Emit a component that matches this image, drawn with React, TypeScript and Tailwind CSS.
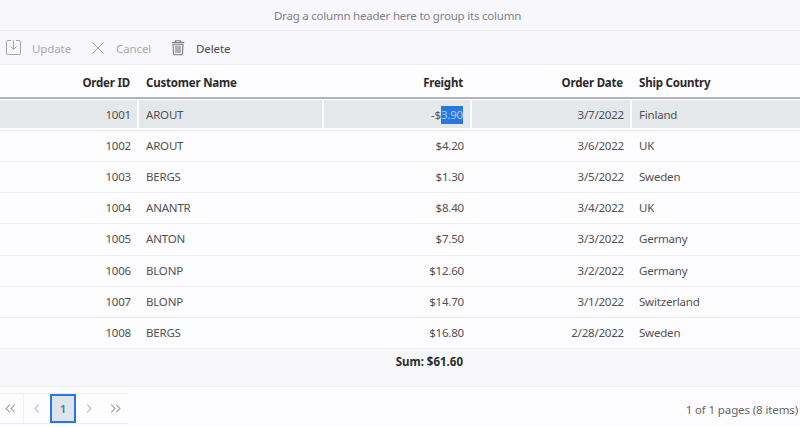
import React from "react";

type Order = { id: number; customer: string; freight: string; date: string; country: string };

const orders: Order[] = [
  { id: 1002, customer: "AROUT", freight: "$4.20", date: "3/6/2022", country: "UK" },
  { id: 1003, customer: "BERGS", freight: "$1.30", date: "3/5/2022", country: "Sweden" },
  { id: 1004, customer: "ANANTR", freight: "$8.40", date: "3/4/2022", country: "UK" },
  { id: 1005, customer: "ANTON", freight: "$7.50", date: "3/3/2022", country: "Germany" },
  { id: 1006, customer: "BLONP", freight: "$12.60", date: "3/2/2022", country: "Germany" },
  { id: 1007, customer: "BLONP", freight: "$14.70", date: "3/1/2022", country: "Switzerland" },
  { id: 1008, customer: "BERGS", freight: "$16.80", date: "2/28/2022", country: "Sweden" },
];

const columns = "grid grid-cols-[139px_185px_148px_160px_168px] items-center";

function UpdateIcon() {
  return (
    <svg width="17" height="17" viewBox="0 0 17 17" fill="none" stroke="#a5a5a7" strokeWidth="1">
      <path d="M6 1.5H2.5a1 1 0 0 0-1 1v12a1 1 0 0 0 1 1h12a1 1 0 0 0 1-1v-12a1 1 0 0 0-1-1H11" />
      <path d="M8.5 1v9.5M5.3 7.3l3.2 3.2 3.2-3.2" />
    </svg>
  );
}

function CancelIcon() {
  return (
    <svg width="12" height="12" viewBox="0 0 12 12" fill="none" stroke="#a0a0a2" strokeWidth="1">
      <path d="M.5.5l11 11M11.5.5l-11 11" />
    </svg>
  );
}

function DeleteIcon() {
  return (
    <svg width="14" height="16" viewBox="0 0 14 16" fill="none" stroke="#77797b" strokeWidth="1.1">
      <path d="M.8 2.5h12.4M4.5 2.3V.8h5v1.5" />
      <path d="M2 4.2l.5 9.6a1 1 0 0 0 1 .9h7a1 1 0 0 0 1-.9l.5-9.6zM5 5.5v7.4M7 5.5v7.4M9 5.5v7.4" />
    </svg>
  );
}

function Chevron({ dir, double = false }: { dir: "left" | "right"; double?: boolean }) {
  return (
    <svg
      width={double ? 11 : 6}
      height="9"
      viewBox={double ? "0 0 11 9" : "0 0 6 9"}
      fill="none"
      stroke={double ? "#a3a3a6" : "#bbbbbe"}
      strokeWidth="1.1"
      className={dir === "right" ? "-scale-x-100" : ""}
    >
      <path d="M4.8.6L1 4.5l3.8 3.9" />
      {double && <path d="M9.8.6L6 4.5l3.8 3.9" />}
    </svg>
  );
}

export default function App() {
  return (
    <div className="flex h-[427px] w-[800px] flex-col overflow-hidden bg-[#fdfcfe] font-['Noto_Sans','Open_Sans',sans-serif] text-[11.5px] leading-4 tracking-[-0.2px] text-[#515254]">
      <div className="flex h-[31px] shrink-0 items-center justify-center border-b border-[#efeef2] bg-[#f8f7fb] pr-[5px] pt-[2px] tracking-[-0.22px] text-[#808184]">
        <span className="whitespace-nowrap">Drag a column header here to group its column</span>
      </div>

      <div className="flex h-[34px] shrink-0 items-center border-b border-[#efeef2] bg-[#f8f7fb] pl-[5px] tracking-[-0.1px] text-[#a9a9ac]">
        <UpdateIcon />
        <span className="ml-[10px] mt-[3px] w-[60px]">Update</span>
        <CancelIcon />
        <span className="ml-[12px] mt-[3px] w-[55px]">Cancel</span>
        <DeleteIcon />
        <span className="ml-[11px] mt-[3px] text-[#4a4b4e]">Delete</span>
      </div>

      <div className={`${columns} h-[34px] shrink-0 border-b-2 border-[#b2b2b5] pt-[3px] font-bold text-[#2a2a2c]`}>
        <span className="pr-[9px] text-right">Order ID</span>
        <span className="pl-[7px]">Customer Name</span>
        <span className="pr-[9px] text-right">Freight</span>
        <span className="pr-[9px] text-right">Order Date</span>
        <span className="pl-[7px]">Ship Country</span>
      </div>

      <div className={`${columns} mt-px h-[31px] shrink-0 border-b border-[#efeef1] pb-[2px]`}>
        <div className="flex h-[28px] items-center justify-end border-r-2 border-[#fdfcfe] bg-[#e5e8eb] pr-[6px] pt-[2px]">1001</div>
        <div className="flex h-[28px] items-center border-r-2 border-[#fdfcfe] bg-[#e5e8eb] pl-[7px] pt-[2px]">AROUT</div>
        <div className="flex h-[28px] items-center justify-end border-r-2 border-[#fdfcfe] bg-[#e5e8eb] pr-[7px] pt-[1px]">
          -$
          <span className="flex h-[18px] items-center bg-[#2879df] text-[#a8cdf8]">3.90</span>
        </div>
        <div className="flex h-[28px] items-center justify-end border-r-2 border-[#fdfcfe] bg-[#e5e8eb] pr-[6px] pt-[2px]">3/7/2022</div>
        <div className="flex h-[28px] items-center bg-[#e5e8eb] pl-[7px] pt-[2px]">Finland</div>
      </div>

      <div className="flex h-[218px] shrink-0 flex-col">
        {orders.map((o) => (
          <div key={o.id} className={`${columns} min-h-0 flex-1 border-b border-[#efeef1]`}>
            <span className="pr-[8px] text-right">{o.id}</span>
            <span className="pl-[7px]">{o.customer}</span>
            <span className="pr-[8px] text-right">{o.freight}</span>
            <span className="pr-[8px] text-right">{o.date}</span>
            <span className="pl-[7px]">{o.country}</span>
          </div>
        ))}
      </div>

      <div className="h-[38px] shrink-0 border-b border-[#efeef1] bg-[#f8f7fb] pt-[5px] font-bold tracking-normal text-[#2a2a2c]">
        <div className="w-[463px] text-right">Sum: $61.60</div>
      </div>

      <div className="flex flex-1 justify-between pt-[6px]">
        <div className="flex h-[31px] w-[128px] items-center border-y border-[#ececef]">
          <span className="flex h-full w-[24px] items-center border-r border-[#f1f0f3] pl-[5px]"><Chevron dir="left" double /></span>
          <span className="flex w-[26px] items-center justify-center"><Chevron dir="left" /></span>
          <span className="flex h-[29px] w-[26px] items-center justify-center border-2 border-[#2477e5] bg-[#dfe3ea] font-semibold text-[#3f79cb]">1</span>
          <span className="flex w-[26px] items-center justify-center"><Chevron dir="right" /></span>
          <span className="flex w-[26px] items-center justify-center"><Chevron dir="right" double /></span>
        </div>
        <div className="pr-[2px] pt-[9px] tracking-[-0.12px] text-[#66676a]">1 of 1 pages (8 items)</div>
      </div>
    </div>
  );
}
